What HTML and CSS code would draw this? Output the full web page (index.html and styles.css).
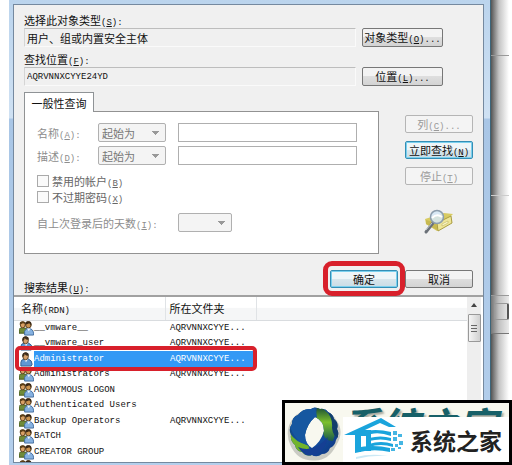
FILE: index.html
```html
<!DOCTYPE html>
<html lang="zh-CN">
<head>
  <meta charset="UTF-8" />
  <meta name="viewport" content="width=device-width, initial-scale=1.0"/>
  <title>选择用户或组</title>
  <link rel="stylesheet" href="styles.css">
</head>
<body>
  <svg class="symbols" width="0" height="0" aria-hidden="true">
    <symbol id="user" viewBox="0 0 16 16">
      <path d="M2 15V11Q2 8 6 7.500L10 7.500Q14 9 14 13L13 15Z" fill="#5f97d3" stroke="#345e8e"/>
      <path d="M5 7L7.500 11L10 7Z" fill="#e8f1fa"/>
      <ellipse cx="7" cy="4.500" rx="3" ry="3.800" fill="#d6a16c" stroke="#553c20"/>
      <path d="M3.500 5Q3 0 8 .5Q11 1 10 4Q7 4 6 2Q6 5 3.500 5Z" fill="#3c2c1c"/>
    </symbol>
    <symbol id="group" viewBox="0 0 16 16">
      <path d="M0 13V9Q1 7 4 7L8 8V13Z" fill="#708b38" stroke="#45561f"/>
      <ellipse cx="4" cy="4" rx="2.600" ry="3.300" fill="#d8a064" stroke="#5f401c"/>
      <path d="M1 4Q0 0 4 .5Q7 0 7 3L4 2.500Z" fill="#5a3e17"/>
      <ellipse cx="10" cy="4" rx="3" ry="3.500" fill="#ca9350" stroke="#4d3415"/>
      <path d="M7 4Q6 0 10 .5Q14 0 13 5L11 2.500Z" fill="#382716"/>
      <path d="M6 15V11Q7 8 10 8Q15 8 15.500 13V15Z" fill="#86b2e1" stroke="#426c9d"/>
      <path d="M8.500 8L10.500 11L12 8Z" fill="#f2f7fb"/>
    </symbol>
  </svg>

  <div class="screen">
    <main class="window">
      <form class="dialog" onsubmit="return false">
        <div class="fields">
          <label for="objectType">选择此对象类型<span class="en">(<u>S</u>):</span></label>
          <div class="line">
            <input type="text" id="objectType" value="用户、组或内置安全主体" readonly>
            <button type="button" class="wide">对象类型<span class="en">(<u>O</u>)...</span></button>
          </div>
          <label for="location">查找位置<span class="en">(<u>F</u>):</span></label>
          <div class="line">
            <input type="text" id="location" class="latin" value="AQRVNNXCYYE24YD" readonly>
            <button type="button" class="wide">位置<span class="en">(<u>L</u>)...</span></button>
          </div>
        </div>

        <div class="query">
          <div class="tabs">
            <button type="button" class="tab">一般性查询</button>
            <div class="panel">
              <div class="filter">
                <label for="nameText">名称<span class="en">(<u>A</u>):</span></label>
                <select disabled aria-label="名称条件"><option>起始为</option></select>
                <input type="text" id="nameText" disabled>
              </div>
              <div class="filter">
                <label for="descText">描述<span class="en">(<u>D</u>):</span></label>
                <select disabled aria-label="描述条件"><option>起始为</option></select>
                <input type="text" id="descText" disabled>
              </div>
              <div class="checks">
                <label><input type="checkbox" disabled><span>禁用的帐户<span class="en">(<u>B</u>)</span></span></label>
                <label><input type="checkbox" disabled><span>不过期密码<span class="en">(<u>X</u>)</span></span></label>
              </div>
              <div class="days">
                <label for="days">自上次登录后的天数<span class="en">(<u>I</u>):</span></label>
                <select id="days" disabled><option></option></select>
              </div>
            </div>
          </div>
          <div class="side">
            <button type="button" disabled>列<span class="en">(<u>C</u>)...</span></button>
            <button type="button" class="active">立即查找<span class="en">(<u>N</u>)</span></button>
            <button type="button" disabled>停止<span class="en">(<u>T</u>)</span></button>
            <svg class="search" width="32" height="26" viewBox="0 0 32 26" aria-hidden="true">
              <path d="M2 10L21 4L30 5L27 8L29 13L14 22L3 15Z" fill="#d8cb62"/>
              <path d="M14 14L28 7L29 14L15 22Z" fill="#eee598" stroke="#aa9d42"/>
              <path d="M3 11L14 14V21L3 15Z" fill="#c7b951"/>
              <path d="M19 15L25 12V14L19 17Z" fill="#fffbd1" stroke="#b3a64e" stroke-width=".5"/>
              <path d="M10 14L3 23" stroke="#6b7178" stroke-width="3" stroke-linecap="round"/>
              <path d="M9 14L3 21" stroke="#bdc6cc"/>
              <circle cx="14" cy="8" r="6.500" fill="#d5e7f6" fill-opacity=".85" stroke="#8c9dad" stroke-width="1.500"/>
              <path d="M9 9Q14 4 19 8" fill="none" stroke="#fff" stroke-width="2"/>
            </svg>
          </div>
        </div>

        <div class="actions">
          <span class="results-label" id="results">搜索结果<span class="en">(<u>U</u>):</span></span>
          <span class="marked"><button type="submit" class="active">确定</button></span>
          <button type="button">取消</button>
        </div>

        <div class="results">
          <table aria-labelledby="results">
            <colgroup><col class="c-icon"><col class="c-name"><col class="c-folder"><col></colgroup>
            <thead>
              <tr><th colspan="2">名称<span class="en">(RDN)</span></th><th>所在文件夹</th><th></th></tr>
            </thead>
            <tbody>
              <tr><td><svg><use href="#group"/></svg></td><td>__vmware__</td><td>AQRVNNXCYYE...</td><td></td></tr>
              <tr><td><svg><use href="#user"/></svg></td><td>__vmware_user</td><td>AQRVNNXCYYE...</td><td></td></tr>
              <tr class="selected"><td><svg><use href="#user"/></svg><span class="ring"></span></td><td>Administrator</td><td>AQRVNNXCYYE...</td><td></td></tr>
              <tr><td><svg><use href="#group"/></svg></td><td>Administrators</td><td>AQRVNNXCYYE...</td><td></td></tr>
              <tr><td><svg><use href="#group"/></svg></td><td>ANONYMOUS LOGON</td><td></td><td></td></tr>
              <tr><td><svg><use href="#group"/></svg></td><td>Authenticated Users</td><td></td><td></td></tr>
              <tr><td><svg><use href="#group"/></svg></td><td>Backup Operators</td><td>AQRVNNXCYYE...</td><td></td></tr>
              <tr><td><svg><use href="#group"/></svg></td><td>BATCH</td><td></td><td></td></tr>
              <tr><td><svg><use href="#group"/></svg></td><td>CREATOR GROUP</td><td></td><td></td></tr>
              <tr><td><svg><use href="#group"/></svg></td><td></td><td></td><td></td></tr>
            </tbody>
          </table>
          <div class="scrollbar">
            <span class="arrow"></span>
            <span class="thumb"></span>
          </div>
        </div>
      </form>
    </main>
    <aside class="behind">
      <div class="strip"></div>
      <div class="strip tall"></div>
      <div class="strip short"></div>
      <div class="strip footer"><span></span></div>
    </aside>

    <div class="brand">
      <svg class="swirl" width="56" height="58" viewBox="0 0 56 58" aria-hidden="true">
        <defs>
          <linearGradient id="blue" x2="1" y2="1"><stop stop-color="#123f62"/><stop offset=".5" stop-color="#1454a8"/><stop offset="1" stop-color="#0b2a70"/></linearGradient>
          <linearGradient id="green" x2="0" y2="1"><stop stop-color="#174a35"/><stop offset=".45" stop-color="#7cc02c"/><stop offset="1" stop-color="#1a5a4a"/></linearGradient>
          <clipPath id="band">
            <path clip-rule="evenodd" d="M24 5Q28 2 33 5Q38 4 41 8Q46 10 47 15Q52 19 50 25Q53 31 49 36Q48 42 43 44Q41 50 35 50Q30 54 25 51Q19 53 15 48Q9 47 8 41Q3 37 4 31Q1 25 5 20Q5 13 11 11Q16 4 24 5ZM28 13Q20 20 18 31Q18 40 25 44Q34 38 37 27Q37 17 28 13Z"/>
          </clipPath>
        </defs>
        <path d="M26 8Q42 8 47 17Q55 28 47 40Q40 55 26 54Q12 54 6 41Q0 28 7 17Q13 8 26 8Z" fill="none" stroke="#9b9d98" stroke-width="5" opacity=".5"/>
        <g clip-path="url(#band)">
          <path d="M0 0H56V58H0Z" fill="url(#blue)"/>
          <path d="M30 3Q29 10 29 14Q37 17 36 28Q37 37 46 37Q51 24 44 14Q39 4 30 3Z" fill="url(#green)"/>
          <path d="M38 5Q46 13 45 24Q46 32 51 34L54 20L43 5Z" fill="#123e6b"/>
          <path d="M1 26Q8 39 21 41L26 54L15 50L5 42Z" fill="#72b42b"/>
          <path d="M2 20Q7 38 25 43Q18 36 20 27Q24 17 30 13L28 3H12Z" fill="#1657a0"/>
          <path d="M11 43Q26 50 41 33Q39 45 27 53Q17 53 11 43Z" fill="#153f93"/>
        </g>
      </svg>
      <span class="ghost">系统之家</span>
      <div class="plate">
        <svg width="62" height="43" viewBox="0 0 62 43" aria-hidden="true">
          <path d="M1 17L38 0L53 9H46L37 5L22 12H28V17H18V34H12V17Z" fill="#1aa4dc"/>
          <path d="M18 14Q32 10 48 14V18Q37 14 28 16V33H23V18H18Z" fill="#1aa4dc"/>
          <path d="M12 30Q30 26 47 30V34Q30 30 12 35Z" fill="#1aa4dc"/>
          <path d="M26 20Q38 17 48 20V23Q38 20 26 23ZM26 26Q38 22 50 26V29Q38 25 26 29Z" fill="#1aa4dc"/>
          <path d="M50 13h4v4h-4zM55 16h4v3h-4zM50 19h4v4h-4zM56 23h4v4h-4zM52 26h3v3h-3zM48 30h4v3h-4zM55 29h3v2h-3z" fill="#45b6e3"/>
          <path d="M13 39Q28 35 45 38Q29 37 13 41Z" fill="#cce9f5"/>
        </svg>
        <strong>系统之家</strong>
      </div>
    </div>
  </div>
</body>
</html>
```

FILE: styles.css
```css
* { box-sizing: border-box; }
body {
  margin: 0;
  background: white;
  color: #111;
  font: 11px/16px "Noto Sans CJK SC", sans-serif;
}
button, input, select {
  margin: 0;
  font: inherit;
  color: inherit;
}
.symbols { position: absolute; }
.en {
  font-family: "Liberation Mono", monospace;
  font-size: 9px;
  line-height: 1;
}

.screen {
  position: relative;
  display: flex;
  height: 100vh;
  padding-left: 9px;
  overflow: hidden;
}
.window {
  flex: 1;
  min-width: 0;
  display: flex;
  padding: 4px 6px 2px 4px;
  background: linear-gradient(#bbd4ed 0, #cfe1f3 118px, #a9c6e6 119px, #b4cfec 100%);
  border-right: 1px solid #3d6579;
}
.dialog {
  flex: 1;
  min-width: 0;
  display: flex;
  flex-direction: column;
  background: #f0f0f0;
  border: 1px solid #75899f;
}

.fields { padding: 8px 10px 0 10px; }
.fields label {
  display: block;
  height: 15px;
  line-height: 15px;
}
.line {
  display: flex;
  gap: 6px;
  padding-right: 30px;
  margin-bottom: 5px;
}
.line input {
  flex: 1;
  min-width: 0;
  height: 19px;
  padding: 0 2px;
  background: #f0f0f0;
  border: 1px solid;
  border-color: #bdbdbd #fafafa #fafafa #d5d5d5;
}
.line .latin {
  font-family: "Liberation Mono", monospace;
  font-size: 9px;
}

button {
  width: 68px;
  height: 18px;
  padding: 0;
  line-height: 14px;
  white-space: nowrap;
  background: linear-gradient(#f3f3f3 50%, #dedede 50%, #d3d3d3);
  border: 1px solid #777;
  border-radius: 2px;
}
button.wide {
  width: 81px;
  height: 19px;
}
button:disabled {
  color: #9a9a9a;
  background: #f4f4f4;
  border-color: #b5b5b5;
}
button.active {
  background: linear-gradient(#eef5f8 50%, #d8e6ec 50%, #cadce5);
  border-color: #348eb5;
  box-shadow: inset 0 0 0 1px #7bd0ee;
}

.query {
  display: flex;
  gap: 26px;
  padding: 1px 10px 0 10px;
}
.tabs {
  flex: 1;
  min-width: 0;
}
.tab {
  display: block;
  position: relative;
  z-index: 1;
  width: 70px;
  height: 20px;
  margin-bottom: -1px;
  background: white;
  border: 1px solid #8f9396;
  border-bottom: 0;
  border-radius: 0;
}
.panel {
  height: 143px;
  padding: 9px 21px 0 12px;
  color: #8d8d8d;
  background: white;
  border: 1px solid #929292;
}
.filter {
  display: flex;
  align-items: center;
  height: 23px;
}
.filter label { width: 61px; }
.filter input {
  flex: 1;
  min-width: 0;
  height: 19px;
  margin-left: 12px;
  background: white;
  border: 1px solid #afafaf;
}
select {
  appearance: none;
  width: 68px;
  height: 19px;
  padding: 0 3px;
  line-height: 16px;
  border: 1px solid #b0b0b0;
  border-radius: 2px;
  background:
    linear-gradient(to bottom left, #999 50%, transparent 50%) right 9px top 7px / 4px 4px no-repeat,
    linear-gradient(to bottom right, #999 50%, transparent 50%) right 5px top 7px / 4px 4px no-repeat,
    #f4f4f4;
}
select:disabled {
  color: #777;
  opacity: 1;
}
.checks {
  padding-top: 6px;
  color: #666;
}
.checks label {
  display: flex;
  align-items: center;
  gap: 3px;
  height: 16px;
}
.checks input {
  appearance: none;
  width: 12px;
  height: 12px;
  background: #fafafa;
  border: 1px solid #aaa;
}
.days {
  display: flex;
  align-items: center;
  gap: 20px;
  padding-top: 8px;
}
.days select { width: 54px; }

.side {
  width: 68px;
  display: flex;
  flex-direction: column;
  align-items: center;
  gap: 8px;
  padding-top: 23px;
}
.search { margin-top: 16px; }

.actions {
  display: flex;
  align-items: flex-start;
  gap: 7px;
  height: 41px;
  padding: 16px 10px 0 10px;
}
.results-label {
  flex: 1;
  padding-top: 9px;
}
.marked {
  position: relative;
  display: flex;
}
.marked::after {
  content: "";
  position: absolute;
  inset: -9px -7px -8px -7px;
  border: 5px solid #d8202b;
  border-radius: 9px;
  pointer-events: none;
}

.results {
  flex: 1;
  min-height: 0;
  display: flex;
  padding-right: 2px;
  overflow: hidden;
  background: white;
  border-top: 2px solid #a1a1a1;
}
table {
  flex: 1;
  align-self: flex-start;
  table-layout: fixed;
  border-collapse: collapse;
  font: 9px/15px "Liberation Mono", monospace;
}
.c-icon { width: 20px; }
.c-name { width: 131px; }
.c-folder { width: 91px; }
th {
  height: 23px;
  padding: 0 5px 0 7px;
  text-align: left;
  font: 11px/20px "Noto Sans CJK SC", sans-serif;
  background: linear-gradient(white 45%, #f5f6f7 50%);
  border-right: 1px solid #e0e3e6;
  border-bottom: 1px solid #d9dcdf;
}
th:nth-child(2) { padding-left: 4px; }
th:last-child { border-right: 0; }
td {
  height: 15px;
  padding: 0;
  white-space: nowrap;
}
tr:nth-child(odd) td { height: 16px; }
td:nth-child(3) { padding-left: 5px; }
td svg {
  display: block;
  width: 15px;
  height: 15px;
  margin-left: 5px;
}
.selected { position: relative; }
.selected td:nth-child(2), .selected td:nth-child(3) {
  color: white;
  background: #3399f5;
}
.ring {
  position: absolute;
  top: -5px;
  left: 1px;
  width: 242px;
  height: 25px;
  border: 4px solid #d8202b;
  border-radius: 5px;
}
.scrollbar {
  width: 14px;
  display: flex;
  flex-direction: column;
  align-items: center;
  gap: 7px;
  padding-top: 6px;
  background: #eee;
}
.arrow {
  border: 3px solid transparent;
  border-top: 0;
  border-bottom: 4px solid #444;
}
.thumb {
  width: 13px;
  height: 28px;
  border: 1px solid #999;
  border-radius: 1px;
  background:
    repeating-linear-gradient(#666 0 1px, transparent 1px 3px) center / 6px 7px no-repeat,
    linear-gradient(90deg, #f5f5f5, #d0d0d0);
}

/* the window underneath, in the dialog's shadow */
.behind {
  width: 21px;
  padding-right: 3px;
  background: linear-gradient(90deg, #555, #c4c4c4 8px, #fff 18px);
}
.strip {
  height: 56px;
  border-bottom: 1px solid #999;
}
.strip.tall {
  height: 140px;
  border-color: #ccc;
}
.strip.short { height: 100px; }
.strip.footer {
  height: 38px;
  padding: 7px 0 0 3px;
  background: rgba(190, 190, 190, 0.3);
  border-color: #777;
}
.strip span {
  display: block;
  height: 17px;
  border: 1px solid #999;
  border-right: 2px solid #555;
  border-radius: 2px;
}

.brand {
  position: absolute;
  right: 0;
  bottom: 0;
  width: 230px;
  height: 65px;
  display: flex;
  align-items: flex-end;
  background: #f8f8ef;
  border: 3px solid black;
}
.swirl { margin-left: 2px; }
.ghost {
  position: absolute;
  top: 0;
  left: 56px;
  font: italic bold 39px/42px "Noto Sans CJK SC", sans-serif;
  color: #176068;
  text-shadow: 2px 2px 2px #a8aaa0;
}
.plate {
  position: relative;
  flex: 1;
  display: flex;
  align-items: center;
  gap: 5px;
  height: 45px;
  background: white;
}
.plate strong {
  font-size: 23px;
  line-height: 40px;
  color: #222;
  white-space: nowrap;
}
```
